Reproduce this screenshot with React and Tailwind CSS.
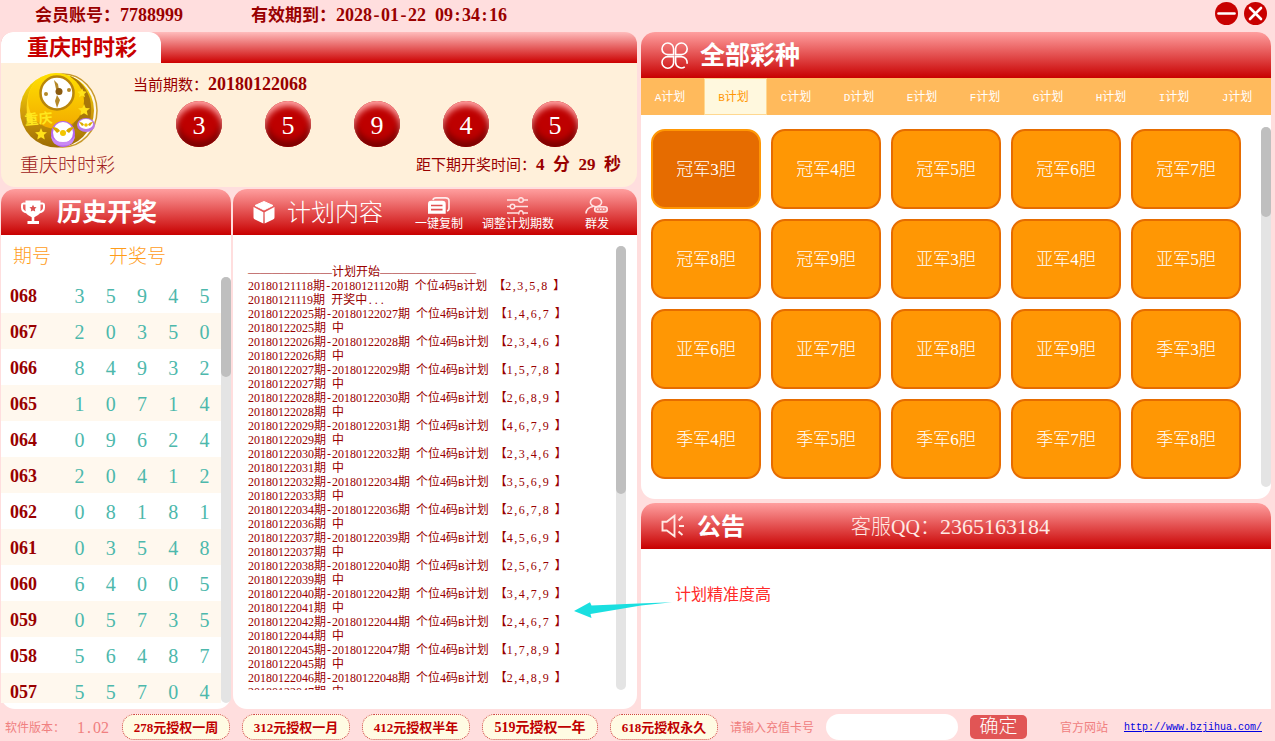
import React from "react";

const FONT = "font-['Liberation_Serif','Noto_Sans_CJK_SC',serif]";
const HEADER = "flex h-[46px] shrink-0 items-center rounded-t-[14px] bg-linear-to-b/srgb from-[#ff9f9f] to-[#c80000] pl-5 text-white";

const history = [
  ["068", "35945"],
  ["067", "20350"],
  ["066", "84932"],
  ["065", "10714"],
  ["064", "09624"],
  ["063", "20412"],
  ["062", "08181"],
  ["061", "03548"],
  ["060", "64005"],
  ["059", "05735"],
  ["058", "56487"],
  ["057", "55704"],
];

const plans = [
  ["20180121118", "20180121120", "2358", "20180121119", "开奖中..."],
  ["20180122025", "20180122027", "1467", "20180122025", "中"],
  ["20180122026", "20180122028", "2346", "20180122026", "中"],
  ["20180122027", "20180122029", "1578", "20180122027", "中"],
  ["20180122028", "20180122030", "2689", "20180122028", "中"],
  ["20180122029", "20180122031", "4679", "20180122029", "中"],
  ["20180122030", "20180122032", "2346", "20180122031", "中"],
  ["20180122032", "20180122034", "3569", "20180122033", "中"],
  ["20180122034", "20180122036", "2678", "20180122036", "中"],
  ["20180122037", "20180122039", "4569", "20180122037", "中"],
  ["20180122038", "20180122040", "2567", "20180122039", "中"],
  ["20180122040", "20180122042", "3479", "20180122041", "中"],
  ["20180122042", "20180122044", "2467", "20180122044", "中"],
  ["20180122045", "20180122047", "1789", "20180122045", "中"],
  ["20180122046", "20180122048", "2489", "20180122047", "中"],
];

const tabs = ["A", "B", "C", "D", "E", "F", "G", "H", "I", "J"];

const lotteries = [
  "冠军3胆", "冠军4胆", "冠军5胆", "冠军6胆", "冠军7胆",
  "冠军8胆", "冠军9胆", "亚军3胆", "亚军4胆", "亚军5胆",
  "亚军6胆", "亚军7胆", "亚军8胆", "亚军9胆", "季军3胆",
  "季军4胆", "季军5胆", "季军6胆", "季军7胆", "季军8胆",
];

const prices = ["278元授权一周", "312元授权一月", "412元授权半年", "519元授权一年", "618元授权永久"];

/* Digits are half an em wide; half-width punctuation gets the same cell. */
function HalfWidth({ text }) {
  return text.split(/([-:,. ])/).filter(Boolean).map((part, i) =>
    /[-:,. ]/.test(part) ? (
      <span key={i} className="inline-block w-[0.5em] text-center whitespace-pre">{part}</span>
    ) : part
  );
}

function Letter({ children }) {
  return <span className="font-['Liberation_Mono',monospace] text-[11px] leading-none">{children}</span>;
}

function Scrollbar({ thumb }) {
  return (
    <div className="w-[10px] shrink-0 rounded-[5px] bg-[#e4e4e4]">
      <div className={`rounded-[5px] bg-[#bfbfbf] ${thumb}`} />
    </div>
  );
}

function TrophyIcon() {
  return (
    <svg width="24" height="24" viewBox="0 0 24 24" fill="none">
      <path d="M5 3.500H2.300Q1 3.500 1 5V7.500Q1 11.500 6 12.500M19 3.500h2.700Q23 3.500 23 5V7.500Q23 11.500 18 12.500" stroke="#fff" strokeWidth="2" />
      <path d="M4.500 0.500h15V10q0 4.500-5 6.500l-1.200.7V21H18v3H6.500v-3h4.200v-3.800l-1.200-.7q-5-2-5-6.500z" fill="#fff" />
      <path d="M12 4.700l1.100 2.300 2.500.3-1.800 1.800.4 2.500L12 10.400l-2.200 1.200.4-2.500-1.800-1.800 2.500-.3z" fill="#dc5050" />
    </svg>
  );
}

function CubeIcon() {
  return (
    <svg width="22" height="23" viewBox="0 0 22 23" fill="#fff">
      <path d="M11 0.500L20 4.500 11 9 2 4.500z" stroke="#fff" strokeLinejoin="round" />
      <path d="M0.500 6l9.900 5.200v11.300L2 18.500Q.5 17.800.5 16.500zM21.500 6l-9.900 5.200v11.300l8.400-4q1.500-.7 1.500-2z" />
    </svg>
  );
}

function CloverIcon() {
  return (
    <svg width="27" height="27" viewBox="0 0 27 27" fill="none" stroke="#fff" strokeWidth="1.600">
      <path d="M12.600 12.600H7A5.800 5.800 0 1 1 12.600 7z" />
      <path d="M14.600 12.600V7A5.800 5.800 0 1 1 20.200 12.600z" />
      <path d="M12.600 14.600V20.200A5.800 5.800 0 1 1 7 14.600z" />
      <path d="M23.800 24.800A5.800 5.800 0 0 1 14.600 20.200V14.600H20.200A5.800 5.800 0 0 1 25.900 21.800" />
    </svg>
  );
}

function SpeakerIcon() {
  return (
    <svg width="24" height="24" viewBox="0 0 24 24" fill="none" stroke="#ffe9e4" strokeWidth="1.900">
      <path d="M1.500 7.800h4.300L13.500 1.800v20.400L5.800 16.500H1.500z" />
      <path d="M17.500 6.500l4-4M18 12h5M17.500 17.500l4 3.500" />
    </svg>
  );
}

function CopyIcon() {
  return (
    <svg width="22" height="17" viewBox="0 0 22 17" fill="none">
      <path d="M5 3Q5.500 0.900 8 0.900h9.500q3.500 0 3.500 3.100v7q0 2.500-2 3" stroke="#ffecec" strokeWidth="1.700" />
      <path d="M3 3.800h11.500q3.200 0 3.200 3.200v9.800H0V7q0-3.200 3-3.200z" fill="#fff" />
      <path d="M3 8.500h11.500M3 12.700h11.500" stroke="#e05050" strokeWidth="1.700" />
    </svg>
  );
}

function SlidersIcon() {
  return (
    <svg width="21" height="18" viewBox="0 0 21 18" fill="none" stroke="#ffe3e3" strokeWidth="1.500">
      <path d="M0 3h11.500M16.500 3H21M0 9.500h3M8 9.500h13M0 16h11.500M16.500 16H21" />
      <circle cx="14" cy="3" r="2.300" />
      <circle cx="5.500" cy="9.500" r="2.300" />
      <path d="M11.700 17.500Q11.700 13.700 14 13.700T16.300 17.500" />
    </svg>
  );
}

function GroupIcon() {
  return (
    <svg width="23" height="17" viewBox="0 0 23 17" fill="none" stroke="#ffe3e3" strokeWidth="1.600">
      <ellipse cx="11" cy="5.200" rx="5.600" ry="4.500" />
      <path d="M1 16.500Q1.500 10.500 8 9.500" />
      <rect x="9.700" y="9.800" width="12.500" height="5.200" rx="2.500" fill="#ffe3e3" fillOpacity=".35" />
      <path d="M12 12.300h1.500M15 12.300h1.500M18 12.300h1.500" />
    </svg>
  );
}

function Star({ x, y, s }) {
  return (
    <path
      transform={`translate(${x} ${y}) scale(${s})`}
      d="M0-6l1.700 3.900 4.300.4-3.200 2.800 1 4.300L0 3.200l-3.800 2.200 1-4.300-3.200-2.800 4.300-.4z"
      fill="#ffe21a"
    />
  );
}

function LotteryLogo() {
  return (
    <svg width="78" height="76" viewBox="0 0 78 76">
      <defs>
        <linearGradient id="disc" x1="0" y1="0" x2="0" y2="1">
          <stop offset="0" stopColor="#ffe600" />
          <stop offset="0.550" stopColor="#cf9a0a" />
          <stop offset="1" stopColor="#9c6b04" />
        </linearGradient>
        <linearGradient id="face" x1="0" y1="0" x2="0" y2="1">
          <stop offset="0" stopColor="#ffe000" />
          <stop offset="1" stopColor="#f2a900" />
        </linearGradient>
      </defs>
      <ellipse cx="43" cy="37.500" rx="34" ry="36.500" fill="#fff8e6" stroke="#c99a2c" strokeWidth="1.500" />
      <ellipse cx="37" cy="37.500" rx="37" ry="37" fill="url(#disc)" />
      <path d="M22 3Q2 16 8 50L13 48Q6 22 22 3z" fill="#ffd91a" />
      <path d="M50 3Q64 8 70 26Q74 46 64 60L52 54Q66 30 50 3z" fill="#a97808" />
      <circle cx="36" cy="28" r="28" fill="url(#face)" />
      <circle cx="37" cy="20" r="16.500" fill="#fff" stroke="#b9860b" strokeWidth="2.500" />
      <g fill="#b5892a">
        <circle cx="26" cy="21" r="2" />
        <circle cx="49" cy="17" r="2" />
        <path d="M34 7l4 4 1 6-3-1zM37 22l3 5-3 8-2-7z" />
        <circle cx="39" cy="18.500" r="3.500" fill="#8a5a10" />
      </g>
      <Star x={62} y={20} s={0.8} />
      <Star x={64} y={37} s={1} />
      <Star x={21} y={61} s={1} />
      <text x="5" y="52" transform="rotate(-5 5 52)" fontSize="14" fontWeight="700" fontFamily="Noto Sans CJK SC" fill="#ffe81f">重庆</text>
      <ellipse cx="43" cy="61" rx="12" ry="13" fill="#b566f0" />
      <ellipse cx="43" cy="59.500" rx="10" ry="10.500" fill="#fff" />
      <path d="M31 63q4 6 12 6t12-6q-1 6-4 8-8 3-16 0-3-2-4-8z" fill="#c98af5" />
      <path d="M32 54q6 0 8 4l-3 2q-3-3-5-6zM54 54q-6 0-8 4l3 2q3-3 5-6z" fill="#d9a900" />
      <circle cx="43" cy="60" r="3" fill="#f2c500" />
      <ellipse cx="66" cy="52" rx="9" ry="7" fill="#b97ae8" />
      <ellipse cx="66" cy="51" rx="7" ry="5" fill="#fff" />
      <path d="M59 49q4 0 5 3l-2 1zM73 49q-4 0-5 3l2 1z" fill="#d9a900" />
      <circle cx="66" cy="52" r="1.800" fill="#f2c500" />
    </svg>
  );
}

function CurrentDraw() {
  return (
    <section className="shrink-0 rounded-[14px] bg-[#fff0da]">
      <div className="flex h-[31px] rounded-t-[12px] bg-linear-to-b/srgb from-[#ffbcbc] to-[#cc0000]">
        <h1 className="w-40 rounded-t-[12px] bg-white pl-[26px] text-[22px] leading-8 font-bold whitespace-nowrap text-[#c80000]">重庆时时彩</h1>
      </div>
      <div className="flex h-[124px]">
        <div className="w-32 shrink-0 pt-[10px] pl-[19px] whitespace-nowrap">
          <LotteryLogo />
          <p className="pt-[5px] text-[19px] leading-6 font-light text-[#a02020]">重庆时时彩</p>
        </div>
        <div className="flex-1 pr-4 whitespace-nowrap text-[#990000]">
          <p className="pt-2 pl-1 text-[15px] leading-[26px]">
            当前期数：<b className="text-lg leading-[26px]">20180122068</b>
          </p>
          <div className="flex gap-[43px] pt-[3px] pl-[47px]">
            {["3", "5", "9", "4", "5"].map((n, i) => (
              <span key={i} className="flex size-[46px] items-center justify-center rounded-full bg-[#be0000] pt-1 text-[26px] leading-none text-white shadow-[inset_0_6px_6px_-1px_#ffa0a0,inset_0_-6px_6px_#7c0000]">{n}</span>
            ))}
          </div>
          <p className="pt-[5px] text-right text-[15px] leading-[26px]">
            距下期开奖时间：<b className="text-[17px] leading-[26px]"><HalfWidth text="4 " />分<HalfWidth text=" 29 " />秒</b>
          </p>
        </div>
      </div>
    </section>
  );
}

function History() {
  return (
    <section className="flex w-[230px] shrink-0 flex-col rounded-[14px] bg-white pb-[6px]">
      <header className={`${HEADER} gap-3`}>
        <TrophyIcon />
        <h2 className="pt-0.5 text-[25px] leading-8 font-bold">历史开奖</h2>
      </header>
      <div className="flex min-h-0 flex-1 flex-col">
        <div className="flex h-[42px] shrink-0 items-center pt-0.5 text-[19px] font-light text-[#ff9c1a]">
          <span className="w-[108px] pl-3">期号</span>
          <span>开奖号</span>
        </div>
        <div className="flex min-h-0 flex-1">
          <div className="min-w-0 flex-1 overflow-hidden">
            <table className="w-full table-fixed border-collapse">
              <tbody>
                {history.map(([id, nums]) => (
                  <tr key={id} className="h-9 even:bg-[#fff8ee]">
                    <th scope="row" className="w-16 p-0 pt-0.5 pl-[9px] text-left text-lg leading-6 font-bold text-[#990000]">{id}</th>
                    {nums.split("").map((n, i) => (
                      <td key={i} className="p-0 pt-0.5 pr-[2px] text-center text-xl leading-6 text-[#4db8ac]">{n}</td>
                    ))}
                  </tr>
                ))}
              </tbody>
            </table>
          </div>
          <Scrollbar thumb="h-[100px]" />
        </div>
      </div>
    </section>
  );
}

function ToolButton({ icon, label }) {
  return (
    <button type="button" className="flex flex-col items-center gap-px text-xs leading-4 whitespace-nowrap">
      <span className="flex h-[18px] items-center">{icon}</span>
      {label}
    </button>
  );
}

function PlanContent() {
  return (
    <section className="flex min-w-0 flex-1 flex-col rounded-[14px] bg-white">
      <header className={`${HEADER} justify-between pr-7`}>
        <div className="flex items-center gap-3">
          <CubeIcon />
          <h2 className="pt-0.5 text-2xl leading-8 font-light whitespace-nowrap">计划内容</h2>
        </div>
        <div className="flex items-start pt-1">
          <ToolButton icon={<CopyIcon />} label="一键复制" />
          <span className="w-[19px]" />
          <ToolButton icon={<SlidersIcon />} label="调整计划期数" />
          <span className="w-[31px]" />
          <ToolButton icon={<GroupIcon />} label="群发" />
        </div>
      </header>
      <div className="mt-[11px] mr-[11px] mb-[19px] flex min-h-0 flex-1">
        <div className="min-w-0 flex-1 overflow-hidden pt-[19px] pl-[15px] text-xs leading-[14px] whitespace-nowrap text-[#990000]">
          <p>———————计划开始————————</p>
          {plans.map(([from, to, nums, at, result]) => (
            <React.Fragment key={from}>
              <p className="h-[14px]">
                {from}期<HalfWidth text="-" />{to}期<HalfWidth text=" " />个位4码<Letter>B</Letter>计划<HalfWidth text=" " />【<HalfWidth text={nums.split("").join(",") + " "} />】
              </p>
              <p className="h-[14px]">
                {at}期<HalfWidth text=" " /><HalfWidth text={result} />
              </p>
            </React.Fragment>
          ))}
        </div>
        <Scrollbar thumb="h-[248px]" />
      </div>
    </section>
  );
}

function AllLotteries() {
  return (
    <section className="shrink-0 rounded-[14px] bg-white pb-3">
      <header className={`${HEADER} gap-3`}>
        <CloverIcon />
        <h2 className="pt-0.5 text-[25px] leading-8 font-bold">全部彩种</h2>
      </header>
      <nav className="grid h-[37px] grid-cols-10 bg-[#ffba5c] text-xs">
        {tabs.map((t) => (
          <button
            key={t}
            type="button"
            className={t === "B" ? "border border-[#ffd890] bg-[#fff8de] pr-1 text-[#ff9704]" : "pr-[5px] text-white"}
          >
            <Letter>{t}</Letter>计划
          </button>
        ))}
      </nav>
      <div className="flex pt-3">
        <div className="grid flex-1 grid-cols-5 gap-[10px] pt-[2px] pr-5 pb-2 pl-[10px]">
          {lotteries.map((name, i) => (
            <button
              key={name}
              type="button"
              className={`h-20 rounded-[14px] border-2 pt-0.5 text-[17px] font-light text-white ${i === 0 ? "border-[#ff9704] bg-[#e66c00]" : "border-[#e66c00] bg-[#ff9704]"}`}
            >
              {name}
            </button>
          ))}
        </div>
        <Scrollbar thumb="h-[90px]" />
      </div>
    </section>
  );
}

function Notice() {
  return (
    <section className="relative flex min-h-0 flex-1 flex-col rounded-t-[14px] bg-white">
      <header className={HEADER}>
        <div className="flex w-[190px] items-center gap-3">
          <SpeakerIcon />
          <h2 className="pt-0.5 text-2xl leading-8 font-bold">公告</h2>
        </div>
        <p className="pt-0.5 text-xl font-light whitespace-nowrap text-[#ffe9e4]">
          客服QQ：<span className="text-[22px]">2365163184</span>
        </p>
      </header>
      <p className="pt-[33px] pl-[34px] text-base leading-[26px] text-[#ff2a2a]">计划精准度高</p>
      <svg className="absolute top-[97px] -left-[68px]" width="100" height="20" viewBox="0 0 100 20">
        <path d="M1 11L17 2.300 18.500 5.500 65 3.600 99 2.200 68 5.600 17.500 14 18.500 18z" fill="#1adfe0" />
      </svg>
    </section>
  );
}

function Footer() {
  return (
    <footer className="flex h-8 shrink-0 items-center pt-1 pr-[13px] pl-[5px] text-xs whitespace-nowrap text-[#f08080]">
      <span className="w-[72px] pt-0.5">软件版本：</span>
      <span className="w-[45px] pt-0.5 text-base leading-5"><HalfWidth text="1.02" /></span>
      <div className="flex gap-3">
        {prices.map((p, i) => (
          <button
            key={p}
            type="button"
            className={`h-[26px] rounded-[12px] border border-dotted border-[#d04040] bg-[#fffbe3] pt-0.5 font-bold text-[#c00000] ${i === 3 ? "w-[116px] text-sm" : "w-[108px] text-[13px]"}`}
          >
            {p}
          </button>
        ))}
      </div>
      <label htmlFor="card" className="px-3 pt-0.5">请输入充值卡号</label>
      <input id="card" type="text" className="h-[26px] w-[132px] rounded-full bg-white px-3 text-[#990000] outline-none" />
      <button type="button" className="ml-3 h-6 w-[57px] rounded-[5px] bg-[#e15555] text-[19px] leading-6 font-light text-white">确定</button>
      <span className="ml-auto pt-0.5 pr-4">官方网站</span>
      <a href="http://www.bzjihua.com/" className="pt-0.5 font-['Liberation_Mono',monospace] text-[10px] text-[#0000e0] underline">http://www.bzjihua.com/</a>
    </footer>
  );
}

export default function App() {
  return (
    <div className={`flex h-screen min-h-[660px] min-w-[1240px] flex-col bg-[#ffdede] ${FONT}`}>
      <div className="flex h-8 shrink-0 items-start justify-between pr-2 pl-[35px]">
        <div className="flex gap-[68px] pt-[3px] text-[17px] leading-6 font-bold whitespace-nowrap text-[#990000]">
          <p>会员账号：<span className="text-lg leading-6">7788999</span></p>
          <p>有效期到：<span className="text-lg leading-6"><HalfWidth text="2028-01-22 09:34:16" /></span></p>
        </div>
        <div className="flex gap-[6px] pt-[2px]">
          <button type="button" aria-label="最小化">
            <svg width="23" height="23" viewBox="0 0 23 23">
              <circle cx="11.500" cy="11.500" r="11.500" fill="#c80000" />
              <path d="M3.500 11.500h16" stroke="#fff" strokeWidth="2.600" strokeLinecap="round" />
            </svg>
          </button>
          <button type="button" aria-label="关闭">
            <svg width="23" height="23" viewBox="0 0 23 23">
              <circle cx="11.500" cy="11.500" r="11.500" fill="#c80000" />
              <path d="M6 6l11 11M17 6L6 17" stroke="#fff" strokeWidth="2.600" strokeLinecap="round" />
            </svg>
          </button>
        </div>
      </div>
      <main className="grid min-h-0 flex-1 grid-cols-[minmax(0,636fr)_minmax(0,630fr)] grid-rows-[minmax(0,1fr)] gap-1 pr-1 pl-px">
        <div className="flex min-h-0 flex-col gap-[2px]">
          <CurrentDraw />
          <div className="flex min-h-0 flex-1 gap-[2px]">
            <History />
            <PlanContent />
          </div>
        </div>
        <div className="flex min-h-0 flex-col gap-1">
          <AllLotteries />
          <Notice />
        </div>
      </main>
      <Footer />
    </div>
  );
}
